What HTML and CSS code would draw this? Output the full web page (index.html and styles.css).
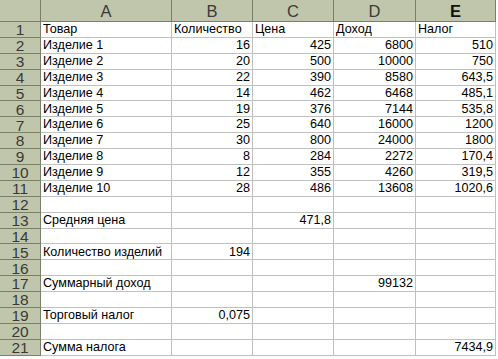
FILE: index.html
```html
<!DOCTYPE html>
<html>
<head>
<meta charset="utf-8">
<link rel="stylesheet" href="styles.css">
</head>
<body>
<div class="sheet">
  <div class="h corner"></div>
  <div class="h col">A</div>
  <div class="h col">B</div>
  <div class="h col">C</div>
  <div class="h col">D</div>
  <div class="h col active">E</div>

  <div class="h row">1</div><div class="c">Товар</div><div class="c">Количество</div><div class="c">Цена</div><div class="c">Доход</div><div class="c">Налог</div>
  <div class="h row">2</div><div class="c">Изделие 1</div><div class="c n">16</div><div class="c n">425</div><div class="c n">6800</div><div class="c n">510</div>
  <div class="h row">3</div><div class="c">Изделие 2</div><div class="c n">20</div><div class="c n">500</div><div class="c n">10000</div><div class="c n">750</div>
  <div class="h row">4</div><div class="c">Изделие 3</div><div class="c n">22</div><div class="c n">390</div><div class="c n">8580</div><div class="c n">643,5</div>
  <div class="h row">5</div><div class="c">Изделие 4</div><div class="c n">14</div><div class="c n">462</div><div class="c n">6468</div><div class="c n">485,1</div>
  <div class="h row">6</div><div class="c">Изделие 5</div><div class="c n">19</div><div class="c n">376</div><div class="c n">7144</div><div class="c n">535,8</div>
  <div class="h row">7</div><div class="c">Изделие 6</div><div class="c n">25</div><div class="c n">640</div><div class="c n">16000</div><div class="c n">1200</div>
  <div class="h row">8</div><div class="c">Изделие 7</div><div class="c n">30</div><div class="c n">800</div><div class="c n">24000</div><div class="c n">1800</div>
  <div class="h row">9</div><div class="c">Изделие 8</div><div class="c n">8</div><div class="c n">284</div><div class="c n">2272</div><div class="c n">170,4</div>
  <div class="h row">10</div><div class="c">Изделие 9</div><div class="c n">12</div><div class="c n">355</div><div class="c n">4260</div><div class="c n">319,5</div>
  <div class="h row">11</div><div class="c">Изделие 10</div><div class="c n">28</div><div class="c n">486</div><div class="c n">13608</div><div class="c n">1020,6</div>
  <div class="h row">12</div><div class="c"></div><div class="c"></div><div class="c"></div><div class="c"></div><div class="c"></div>
  <div class="h row">13</div><div class="c">Средняя цена</div><div class="c"></div><div class="c n">471,8</div><div class="c"></div><div class="c"></div>
  <div class="h row">14</div><div class="c"></div><div class="c"></div><div class="c"></div><div class="c"></div><div class="c"></div>
  <div class="h row">15</div><div class="c">Количество изделий</div><div class="c n">194</div><div class="c"></div><div class="c"></div><div class="c"></div>
  <div class="h row">16</div><div class="c"></div><div class="c"></div><div class="c"></div><div class="c"></div><div class="c"></div>
  <div class="h row">17</div><div class="c">Суммарный доход</div><div class="c"></div><div class="c"></div><div class="c n">99132</div><div class="c"></div>
  <div class="h row">18</div><div class="c"></div><div class="c"></div><div class="c"></div><div class="c"></div><div class="c"></div>
  <div class="h row">19</div><div class="c">Торговый налог</div><div class="c n">0,075</div><div class="c"></div><div class="c"></div><div class="c"></div>
  <div class="h row">20</div><div class="c"></div><div class="c"></div><div class="c"></div><div class="c"></div><div class="c"></div>
  <div class="h row">21</div><div class="c">Сумма налога</div><div class="c"></div><div class="c"></div><div class="c"></div><div class="c n">7434,9</div>
</div>
</body>
</html>
```

FILE: styles.css
```css
html, body {
  margin: 0;
  padding: 0;
  background: #ffffff;
}
.sheet {
  display: grid;
  grid-template-columns: 41px 131px 81px 81px 82px 80px;
  grid-template-rows: 22px repeat(21, 15.9px);
  font-family: "Liberation Sans", Arial, sans-serif;
  font-size: 12.6px;
  color: #000;
}
.h {
  background: #c0c6ab;
  color: #3a3a3a;
  box-sizing: border-box;
  border-right: 1px solid #7a7f68;
  border-bottom: 1px solid #7a7f68;
  display: flex;
  align-items: center;
  justify-content: center;
  line-height: 1;
}
.col {
  font-size: 16.5px;
  padding-top: 1px;
}
.col.active {
  font-weight: bold;
  color: #111;
}
.row {
  font-size: 15.5px;
  padding-top: 1px;
}
.c {
  box-sizing: border-box;
  border-right: 1px solid #c0c0c0;
  border-bottom: 1px solid #c0c0c0;
  padding: 0 2px 0 2px;
  display: flex;
  align-items: center;
  white-space: nowrap;
  overflow: visible;
  line-height: 1;
}
.n {
  justify-content: flex-end;
}
```
